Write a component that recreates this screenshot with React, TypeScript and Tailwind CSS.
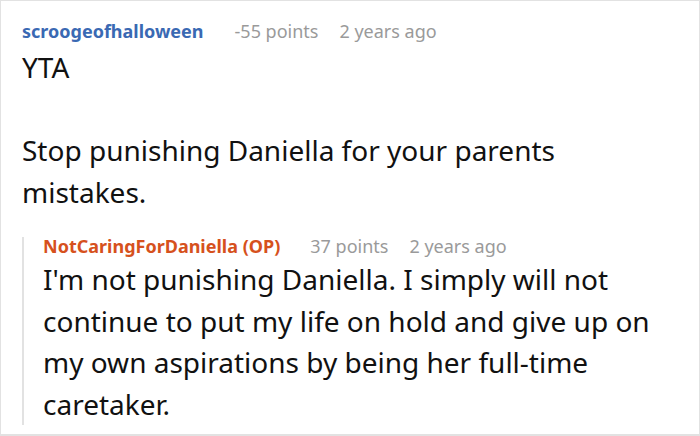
export default function App() {
  return (
    <div className="w-[700px] h-[436px] bg-white border border-[#e2e2e2] border-b-2 overflow-hidden pl-[21px] pr-[40px] pt-[16px] text-[#111]" style={{ fontFamily: '"Noto Sans", "Open Sans", sans-serif' }}>
      <div className="flex items-baseline gap-[31px] text-[18px] leading-[28px]">
        <span className="font-bold text-[#3a69b3]">scroogeofhalloween</span>
        <div className="flex gap-[21px] text-[#9a9a9a]">
          <span>-55 points</span>
          <span>2 years ago</span>
        </div>
      </div>
      <div className="mt-[2px] text-[28px] leading-[41.5px]">
        <p>YTA</p>
        <p>&nbsp;</p>
        <p>Stop punishing Daniella for your parents mistakes.</p>
      </div>
      <div className="mt-[24px] border-l-2 border-[#e2e2e2] pl-[19px]">
        <div className="flex items-baseline gap-[30px] text-[18px] leading-[18px]">
          <span className="font-bold text-[#d6511d]">NotCaringForDaniella (OP)</span>
          <div className="flex gap-[21px] text-[#9a9a9a]">
            <span>37 points</span>
            <span>2 years ago</span>
          </div>
        </div>
        <p className="mt-[4px] text-[28px] leading-[41.5px]">
          I'm not punishing Daniella. I simply will not continue to put my life on hold and give up on my own aspirations by being her full-time caretaker.
        </p>
      </div>
    </div>
  );
}
